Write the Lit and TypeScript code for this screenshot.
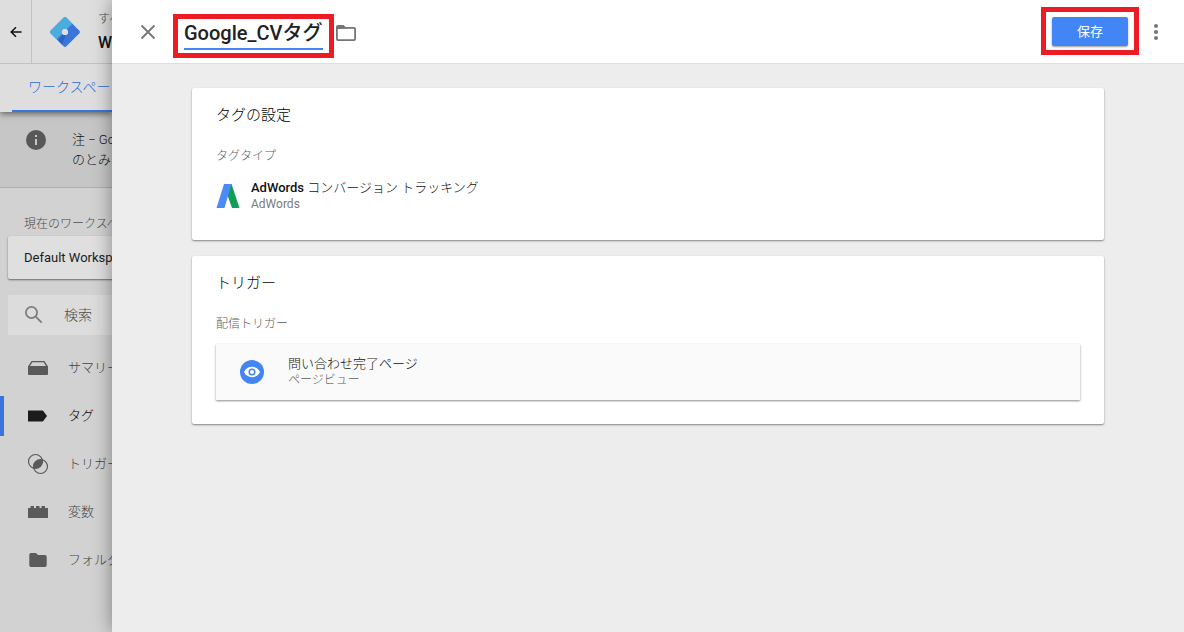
import { LitElement, html, css, svg } from "lit";
import { customElement, property } from "lit/decorators.js";

const navIcons = {
  summary: svg`<path fill-rule="evenodd" d="M5.600 5h12.800L22 10.500V18a1 1 0 0 1-1 1H3a1 1 0 0 1-1-1V10.500zM6.400 6.200 4 10h16l-2.400-3.800z"/>`,
  tag: svg`<path d="M2 6.500h14.500a1 1 0 0 1 .8.400L21 12l-3.700 5.100a1 1 0 0 1-.8.400H2z"/>`,
  trigger: svg`<circle class="ring" cx="9.500" cy="9.500" r="7"/><circle class="ring" cx="14.500" cy="14.500" r="7"/><path d="M7.600 15.900C6.600 11 11 6.600 16.400 8.100 17.400 13 13 17.400 7.600 15.900z"/>`,
  variable: svg`<path d="M2 8h2.500V6h3.500v2h2V6h3.500v2h2V6H19v2h3v10H2z"/>`,
  folder: svg`<path d="M5 5h5l2 2h7a1.700 1.700 0 0 1 1.700 1.700v8.600A1.700 1.700 0 0 1 19 19H5a1.700 1.700 0 0 1-1.700-1.700V6.700A1.700 1.700 0 0 1 5 5z"/>`,
};

const navItems = [
  { icon: navIcons.summary, label: "サマリー", active: false },
  { icon: navIcons.tag, label: "タグ", active: true },
  { icon: navIcons.trigger, label: "トリガー", active: false },
  { icon: navIcons.variable, label: "変数", active: false },
  { icon: navIcons.folder, label: "フォルダ", active: false },
];

const shared = css`
  * {
    box-sizing: border-box;
  }
  button {
    font: inherit;
    border: 0;
    padding: 0;
    background: none;
    cursor: pointer;
  }
  a {
    color: inherit;
    text-decoration: none;
  }
  svg {
    display: block;
    flex: none;
  }
  h1, h2, h3, p, ul {
    margin: 0;
    padding: 0;
    font-weight: inherit;
  }
  .light {
    font-weight: 300;
  }
`;

@customElement("workspace-panel")
export class WorkspacePanel extends LitElement {
  static styles = [
    shared,
    css`
      :host {
        display: block;
        overflow: hidden;
        white-space: nowrap;
        background: #d2d2d2;
        color: #111;
        font-size: 13px;
      }
      .top {
        position: relative;
        background: #dedede;
        box-shadow: 0 2px 6px rgba(0, 0, 0, 0.5);
      }
      .bar {
        display: flex;
        height: 64px;
        border-bottom: 1px solid #c2c2c2;
      }
      .back {
        display: grid;
        place-items: center;
        width: 32px;
        flex: none;
        border-right: 1px solid #c2c2c2;
      }
      .logo {
        margin: 17px 18px 0;
      }
      .account {
        padding-top: 10px;
      }
      .all {
        font-size: 12px;
        line-height: 18px;
        color: #4c4c4c;
      }
      .name {
        font-size: 16px;
        line-height: 30px;
        font-weight: 500;
      }
      .tab {
        display: block;
        margin-left: 12px;
        padding-left: 16px;
        height: 48px;
        line-height: 46px;
        font-size: 14px;
        color: #2f6ad6;
        border-bottom: 2px solid #3a75dc;
      }
      .note {
        display: flex;
        gap: 26px;
        height: 76px;
        padding: 18px 0 0 26px;
        line-height: 20px;
        background: #c6c6c6;
        border-bottom: 1px solid #aeaeae;
      }
      .caption {
        padding: 27px 0 0 24px;
        font-size: 12px;
        line-height: 18px;
        color: #4c4c4c;
        height: 48px;
      }
      .workspace {
        display: block;
        width: 240px;
        height: 43px;
        margin-left: 8px;
        padding-left: 16px;
        text-align: left;
        color: #1c1c1c;
        background: #dfdfdf;
        border-radius: 2px;
        box-shadow: 0 1px 2px rgba(0, 0, 0, 0.5);
      }
      .search {
        display: flex;
        align-items: center;
        gap: 18px;
        width: 240px;
        height: 40px;
        margin: 16px 0 0 8px;
        padding-left: 14px;
        background: #dcdcdc;
        border-radius: 2px;
      }
      .search input {
        font: inherit;
        font-size: 14px;
        width: 160px;
        border: 0;
        padding: 0;
        background: none;
        outline: 0;
      }
      .search input::placeholder {
        color: #4c4c4c;
        opacity: 1;
      }
      .nav {
        list-style: none;
        display: grid;
        gap: 8px;
        padding-top: 13px;
      }
      .item {
        display: flex;
        align-items: center;
        gap: 18px;
        height: 40px;
        padding-left: 22px;
        border-left: 4px solid transparent;
        color: #444;
        fill: #5a5a5a;
      }
      .item.active {
        border-color: #3a75dc;
        color: #000;
        fill: #1c1c1c;
      }
      .text {
        padding-bottom: 4px;
      }
      .ring {
        fill: none;
        stroke: #5a5a5a;
        stroke-width: 1.2;
      }
    `,
  ];

  render() {
    return html`
      <header class="top">
        <div class="bar">
          <button class="back" aria-label="戻る">
            <svg width="12" height="12" viewBox="0 0 12 12" fill="none" stroke="#111" stroke-width="1.5">
              <path d="M11.500 6H1.500M6 1.200 1.200 6 6 10.800" />
            </svg>
          </button>
          <svg class="logo" width="30" height="30" viewBox="0 0 30 30">
            <path fill="#3a75dc" d="M13.600.8a2 2 0 0 1 2.800 0l12.800 12.800a2 2 0 0 1 0 2.800L16.400 29.200a2 2 0 0 1-2.800 0L.8 16.400a2 2 0 0 1 0-2.800z" />
            <path fill="#2f62bd" d="M8 23.600 15 15v5l-3 7.600z" />
            <path fill="#4cacdc" d="M13.600.8a2 2 0 0 1 2.800 0L22.300 6.700 6.700 22.300.8 16.400a2 2 0 0 1 0-2.800z" />
            <path fill="#dedede" d="M13.500 12h3l1.500 1.500v3L16.500 18h-3L12 16.500v-3z" />
          </svg>
          <div class="account">
            <p class="all light">すべてのアカウント</p>
            <p class="name">Web</p>
          </div>
        </div>
        <a class="tab light" href="#workspace">ワークスペース</a>
      </header>
      <section class="note">
        <svg width="20" height="20" viewBox="0 0 20 20">
          <circle cx="10" cy="10" r="10" fill="#585858" />
          <path fill="#c6c6c6" d="M9 5h2v2H9zM9 9h2v6H9z" />
        </svg>
        <p class="light">注 − Google タグ<br />のとみなされます</p>
      </section>
      <p class="caption light">現在のワークスペース</p>
      <button class="workspace">Default Workspace</button>
      <label class="search light">
        <svg width="24" height="24" viewBox="0 0 24 24" fill="none" stroke="#7d7d7d" stroke-width="1.800">
          <circle cx="9.500" cy="9.500" r="5.600" />
          <path d="m13.700 13.700 6 6" />
        </svg>
        <input type="search" placeholder="検索" aria-label="検索" />
      </label>
      <ul class="nav light">
        ${navItems.map(
          (item) => html`
            <li>
              <a class="item ${item.active ? "active" : ""}" href="#nav">
                <svg width="24" height="24" viewBox="0 0 24 24">${item.icon}</svg>
                <span class="text">${item.label}</span>
              </a>
            </li>
          `
        )}
      </ul>
    `;
  }
}

@customElement("setting-card")
export class SettingCard extends LitElement {
  @property() heading = "";
  @property() caption = "";

  static styles = [
    shared,
    css`
      :host {
        display: block;
        padding: 16px 24px 24px;
        background: #fff;
        border-radius: 2px;
        box-shadow: 0 1px 2px rgba(0, 0, 0, 0.45);
      }
      .heading {
        font-size: 15px;
        line-height: 22px;
        color: #000;
      }
      .caption {
        margin-top: 20px;
        font-size: 12px;
        line-height: 20px;
        color: #5c5c5c;
      }
    `,
  ];

  render() {
    return html`
      <h2 class="heading light">${this.heading}</h2>
      <h3 class="caption light">${this.caption}</h3>
      <slot></slot>
    `;
  }
}

@customElement("app-root")
export class AppRoot extends LitElement {
  static styles = [
    shared,
    css`
      :host {
        display: grid;
        grid-template-columns: 112px minmax(0, 1fr);
        min-height: 100vh;
        font-family: Roboto, "Noto Sans CJK JP", sans-serif;
        font-size: 13px;
        color: #212121;
      }
      .sheet {
        position: relative;
        background: #ededed;
        box-shadow: 0 0 18px rgba(0, 0, 0, 0.4);
      }
      .head {
        display: flex;
        align-items: center;
        height: 64px;
        padding: 0 16px 0 24px;
        background: #fff;
        border-bottom: 1px solid #dedede;
      }
      .marked {
        border: 5px solid #ed1c24;
      }
      .title {
        margin: 9px 2px 0 13px;
        padding: 0 6px;
        height: 44px;
      }
      .title input {
        display: block;
        width: 139px;
        height: 31px;
        padding: 0 0 4px;
        border: 0;
        border-bottom: 2px solid #4285f4;
        border-radius: 0;
        outline: 0;
        background: none;
        color: #212121;
        font: inherit;
        font-size: 20px;
        font-weight: 500;
      }
      .folder {
        margin-top: 2px;
      }
      .action {
        margin: 0 0 2px auto;
        padding: 5px 6px 4px;
        height: 48px;
      }
      .save {
        display: block;
        width: 76px;
        height: 29px;
        padding-bottom: 2px;
        color: #fff;
        background: #4285f4;
        border-radius: 2px;
        box-shadow: 0 1px 2px rgba(0, 0, 0, 0.4);
      }
      .more {
        margin-left: 5px;
      }
      .body {
        display: grid;
        gap: 16px;
        padding: 24px 80px;
      }
      .type {
        display: flex;
        align-items: center;
        gap: 11px;
        margin-top: 10px;
        height: 40px;
      }
      .trigger {
        display: flex;
        align-items: center;
        gap: 24px;
        width: 100%;
        height: 56px;
        margin-top: 10px;
        padding-left: 24px;
        text-align: left;
        background: #fafafa;
        box-shadow: 0 1px 2px rgba(0, 0, 0, 0.45);
      }
      .label,
      .sub {
        display: block;
        line-height: 16px;
      }
      .label {
        font-size: 13px;
        color: #111;
      }
      .strong {
        font-weight: 500;
      }
      .sub {
        font-size: 12px;
        color: #7b7b7b;
      }
      .sub.light {
        color: #5c5c5c;
      }
    `,
  ];

  render() {
    return html`
      <workspace-panel></workspace-panel>
      <main class="sheet">
        <header class="head">
          <button aria-label="閉じる">
            <svg width="24" height="24" viewBox="0 0 24 24" fill="none" stroke="#757575" stroke-width="1.800">
              <path d="m5.500 5.500 13 13m0-13-13 13" />
            </svg>
          </button>
          <div class="title marked">
            <input aria-label="タグ名" value="Google_CVタグ" />
          </div>
          <button class="folder" aria-label="フォルダに移動">
            <svg width="20" height="16" viewBox="0 0 20 16">
              <path fill="#757575" fill-rule="evenodd" d="M2 0h5.500l2 2H18a2 2 0 0 1 2 2v10a2 2 0 0 1-2 2H2a2 2 0 0 1-2-2V2a2 2 0 0 1 2-2zM1.800 4v9.500a.7.7 0 0 0 .7.7h15a.7.7 0 0 0 .7-.7V4.500a.7.7 0 0 0-.7-.7z" />
            </svg>
          </button>
          <div class="action marked">
            <button class="save">保存</button>
          </div>
          <button class="more" aria-label="その他">
            <svg width="24" height="24" viewBox="0 0 24 24" fill="#757575">
              <circle cx="12" cy="6" r="2" />
              <circle cx="12" cy="12" r="2" />
              <circle cx="12" cy="18" r="2" />
            </svg>
          </button>
        </header>
        <div class="body">
          <setting-card heading="タグの設定" caption="タグタイプ">
            <div class="type">
              <svg width="24" height="24" viewBox="0 0 24 24">
                <path fill="#0f9d58" d="M8 0h7.500l8 24h-7.500L11 10z" />
                <path fill="#4c8bf5" d="M8 0h7.500L8.500 24H.5z" />
              </svg>
              <div>
                <span class="label strong">AdWords <span class="light">コンバージョン トラッキング</span></span>
                <span class="sub">AdWords</span>
              </div>
            </div>
          </setting-card>
          <setting-card heading="トリガー" caption="配信トリガー">
            <button class="trigger">
              <svg width="24" height="24" viewBox="0 0 24 24">
                <circle cx="12" cy="12" r="12" fill="#4285f4" />
                <path fill="#fff" d="M4 12c1.500-3.300 4.500-5.200 8-5.200s6.500 1.900 8 5.200c-1.500 3.300-4.500 5.200-8 5.200S5.500 15.300 4 12z" />
                <circle cx="12" cy="12" r="2.800" fill="#fff" stroke="#4285f4" stroke-width="1.500" />
              </svg>
              <span>
                <span class="label light">問い合わせ完了ページ</span>
                <span class="sub light">ページビュー</span>
              </span>
            </button>
          </setting-card>
        </div>
      </main>
    `;
  }
}
